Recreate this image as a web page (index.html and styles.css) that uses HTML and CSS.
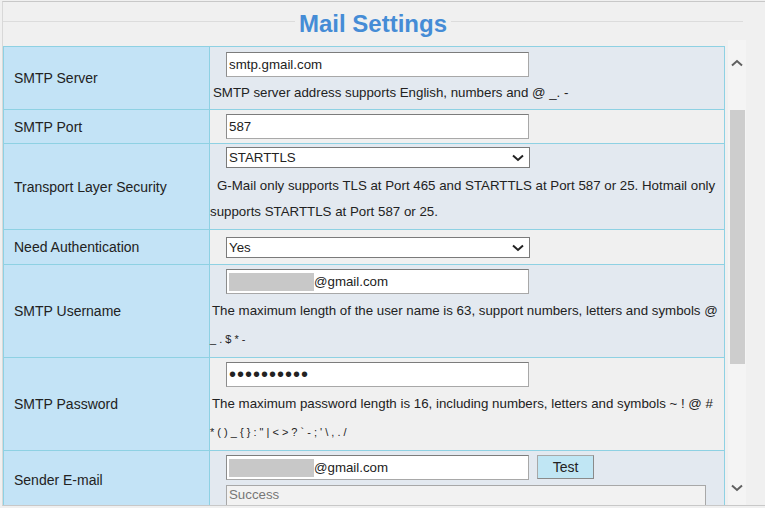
FILE: index.html
```html
<!DOCTYPE html>
<html lang="en">
<head>
  <meta charset="UTF-8" />
  <title>Mail Settings</title>
  <link rel="stylesheet" href="styles.css">
</head>
<body>
  <div class="frame">
    <div class="title-bar">
      <h1>Mail Settings</h1>
    </div>

    <div class="panel">
      <div class="panel-body">
        <table class="settings">
          <!-- SMTP Server -->
          <tr class="alt">
            <td class="label">SMTP Server</td>
            <td class="value server">
              <input class="field first" type="text" value="smtp.gmail.com">
              <p class="hint">SMTP server address supports English, numbers and @ _. -</p>
            </td>
          </tr>

          <!-- SMTP Port -->
          <tr>
            <td class="label">SMTP Port</td>
            <td class="value">
              <input class="field" type="text" value="587">
            </td>
          </tr>

          <!-- Transport Layer Security -->
          <tr class="alt">
            <td class="label">Transport Layer Security</td>
            <td class="value tls">
              <div class="select">
                <span>STARTTLS</span>
                <svg width="12" height="8" viewBox="0 0 12 8"><path d="M1 1.5 L6 6 L11 1.5" fill="none" stroke="#222" stroke-width="2"/></svg>
              </div>
              <p class="hint wide">G-Mail only supports TLS at Port 465 and STARTTLS at Port 587 or 25. Hotmail only<br>supports STARTTLS at Port 587 or 25.</p>
            </td>
          </tr>

          <!-- Need Authentication -->
          <tr>
            <td class="label">Need Authentication</td>
            <td class="value single">
              <div class="select">
                <span>Yes</span>
                <svg width="12" height="8" viewBox="0 0 12 8"><path d="M1 1.5 L6 6 L11 1.5" fill="none" stroke="#222" stroke-width="2"/></svg>
              </div>
            </td>
          </tr>

          <!-- SMTP Username -->
          <tr class="alt">
            <td class="label">SMTP Username</td>
            <td class="value">
              <div class="field masked"><span class="blur"></span>@gmail.com</div>
              <p class="hint spaced">The maximum length of the user name is 63, support numbers, letters and symbols @<br><span class="small">_ . $ * -</span></p>
            </td>
          </tr>

          <!-- SMTP Password -->
          <tr>
            <td class="label">SMTP Password</td>
            <td class="value">
              <input class="field password" type="password" value="0123456789">
              <p class="hint spaced">The maximum password length is 16, including numbers, letters and symbols ~ ! @ #<br><span class="small">* ( ) _ { } : " | &lt; &gt; ? ` - ; ' \ , . /</span></p>
            </td>
          </tr>

          <!-- Sender E-mail -->
          <tr class="alt">
            <td class="label">Sender E-mail</td>
            <td class="value">
              <div class="field-row">
                <div class="field masked"><span class="blur"></span>@gmail.com</div>
                <button class="test-btn">Test</button>
              </div>
              <div class="result">Success</div>
            </td>
          </tr>
        </table>
      </div>

      <div class="scrollbar">
        <svg width="12" height="8" viewBox="0 0 12 8"><path d="M1 6.5 L6 2 L11 6.5" fill="none" stroke="#606060" stroke-width="2"/></svg>
        <div class="thumb"></div>
        <svg class="down" width="12" height="8" viewBox="0 0 12 8"><path d="M1 1.5 L6 6 L11 1.5" fill="none" stroke="#606060" stroke-width="2"/></svg>
      </div>
    </div>
  </div>
</body>
</html>
```

FILE: styles.css
```css
* {
  box-sizing: border-box;
  margin: 0;
  padding: 0;
}
body {
  font-family: 'Liberation Sans', Arial, sans-serif;
  background-color: #f0f0f0;
  color: #222;
  height: 508px;
  overflow: hidden;
}
.frame {
  margin-top: 1px;
  margin-left: 2px;
  border-top: 1px solid #c8c8c8;
  border-left: 1px solid #d8d8d8;
  border-bottom: 1px solid #c8c8c8;
}
.title-bar {
  width: 740px;
  height: 38px;
  display: flex;
  align-items: center;
}
.title-bar::before,
.title-bar::after {
  content: '';
  flex: 1;
  border-top: 1px solid #dcdcdc;
}
.title-bar h1 {
  font-size: 24px;
  line-height: 24px;
  padding: 6px 4px 0;
  color: #458cd6;
  font-weight: bold;
}
.panel {
  display: flex;
  height: 465px;
}
.panel-body {
  width: 722px;
  padding-top: 6px;
  overflow: hidden;
}
.settings {
  width: 722px;
  border-collapse: collapse;
  border: 1px solid #8ed1e3;
}
.settings td {
  border: 1px solid #8ed1e3;
  vertical-align: top;
}
.settings .label {
  width: 206px;
  background-color: #c3e3f6;
  font-size: 14px;
  padding-left: 10px;
  vertical-align: middle;
}
.settings .value {
  padding: 4px 0;
  background-color: #f0f0f0;
}
.settings tr.alt .value {
  background-color: #e3e9f0;
}
.settings .value.server {
  padding-bottom: 2px;
}
.settings .value.server .hint {
  margin-top: 2px;
}
.settings .value.tls {
  padding-top: 3px;
}
.settings .value.single {
  padding: 7px 0 6px;
}
.field {
  display: block;
  width: 303px;
  height: 25px;
  margin-left: 16px;
  padding: 0 2px;
  background-color: #fff;
  border: 1px solid #a8a8a8;
  border-top-color: #7c7c7c;
  border-left-color: #8c8c8c;
  font-family: 'Liberation Sans', Arial, sans-serif;
  font-size: 13.3px;
  color: #222;
  outline: none;
}
.field.first {
  margin-top: 1px;
}
.field.masked {
  display: flex;
  align-items: center;
}
.field .blur {
  width: 85px;
  height: 18px;
  background-color: #c8c8c8;
}
.field.password {
  font-size: 20px;
  letter-spacing: 1px;
  padding-left: 2px;
}
.select {
  width: 304px;
  height: 21px;
  margin-left: 16px;
  padding: 0 5px 0 2px;
  display: flex;
  align-items: center;
  justify-content: space-between;
  background-color: #fff;
  border: 1px solid #7a7a7a;
  font-size: 13.3px;
}
.hint {
  font-size: 13.3px;
  line-height: 28px;
  text-indent: 3px;
  white-space: nowrap;
}
.hint.wide {
  margin-top: 5px;
  line-height: 26px;
  text-indent: 7px;
}
.hint.spaced {
  margin-top: 3px;
  text-indent: 2px;
}
.hint .small {
  font-size: 11px;
}
.field-row {
  display: flex;
  gap: 8px;
}
.field-row .field {
  margin-left: 16px;
}
.test-btn {
  width: 57px;
  height: 24px;
  background-color: #c0e6f4;
  border: 1px solid #a8a8a8;
  border-right-color: #8a8a8a;
  border-bottom-color: #8a8a8a;
  font-family: 'Liberation Sans', Arial, sans-serif;
  font-size: 14px;
  color: #222;
}
.result {
  width: 480px;
  height: 20px;
  margin: 5px 0 0 16px;
  padding: 1px 2px;
  border: 1px solid #a8a8a8;
  border-bottom: none;
  background-color: #f2f2f2;
  font-size: 13.3px;
  color: #777;
}
.scrollbar {
  width: 18px;
  margin-left: 3px;
  padding-top: 19px;
  display: flex;
  flex-direction: column;
  align-items: center;
  background-color: #f4f4f4;
}
.scrollbar .thumb {
  width: 15px;
  height: 254px;
  margin: 43px 0 0 1px;
  background-color: #cdcdcd;
}
.scrollbar .down {
  margin-top: 120px;
}
```
